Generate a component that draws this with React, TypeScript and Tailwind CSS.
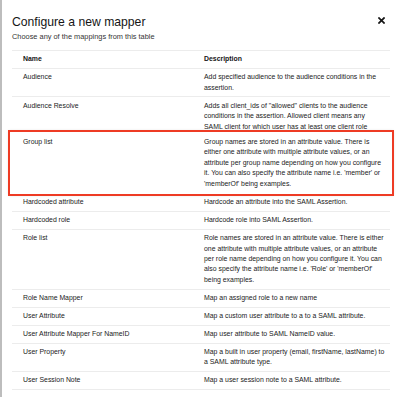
import { Fragment } from 'react';

type Mapper = {
  name: string;
  description: string;
  narrow?: boolean;
};

const mappers: Mapper[] = [
  {
    name: 'Audience',
    description: 'Add specified audience to the audience conditions in the assertion.',
  },
  {
    name: 'Audience Resolve',
    description:
      'Adds all client_ids of "allowed" clients to the audience conditions in the assertion. Allowed client means any SAML client for which user has at least one client role',
    narrow: true,
  },
  {
    name: 'Group list',
    description:
      "Group names are stored in an attribute value. There is either one attribute with multiple attribute values, or an attribute per group name depending on how you configure it. You can also specify the attribute name i.e. 'member' or 'memberOf' being examples.",
  },
  { name: 'Hardcoded attribute', description: 'Hardcode an attribute into the SAML Assertion.' },
  { name: 'Hardcoded role', description: 'Hardcode role into SAML Assertion.' },
  {
    name: 'Role list',
    description:
      "Role names are stored in an attribute value. There is either one attribute with multiple attribute values, or an attribute per role name depending on how you configure it. You can also specify the attribute name i.e. 'Role' or 'memberOf' being examples.",
  },
  { name: 'Role Name Mapper', description: 'Map an assigned role to a new name' },
  { name: 'User Attribute', description: 'Map a custom user attribute to a to a SAML attribute.' },
  { name: 'User Attribute Mapper For NameID', description: 'Map user attribute to SAML NameID value.' },
  {
    name: 'User Property',
    description: 'Map a built in user property (email, firstName, lastName) to a SAML attribute type.',
  },
  { name: 'User Session Note', description: 'Map a user session note to a SAML attribute.' },
];

function CloseIcon() {
  return (
    <svg width="7" height="7" viewBox="0 0 8 8" className="text-[#151515]">
      <path d="M1.2 1.2 L6.8 6.8 M6.8 1.2 L1.2 6.8" stroke="currentColor" strokeWidth="2" strokeLinecap="square" />
    </svg>
  );
}

export default function App() {
  return (
    <div
      className="w-[400px] h-[397px] overflow-hidden bg-white flex"
      style={{ fontFamily: '"Liberation Sans", Arial, sans-serif' }}
    >
      <div className="w-[2px] bg-[#bdbdbd] shrink-0" />
      <div className="flex-1 pl-[10px] pr-[10px] pt-[13px]">
        <div className="flex items-start justify-between">
          <h1 className="text-[12.2px] leading-[18px] text-[#151515]">Configure a new mapper</h1>
          <button className="mt-[4px] mr-[5px]">
            <CloseIcon />
          </button>
        </div>
        <p className="mt-[1px] text-[7.4px] leading-[10px] text-[#333]">Choose any of the mappings from this table</p>

        <div className="mt-[8px] border-t border-[#ececec] text-[6.9px] leading-[10.4px] text-[#222]">
          <div className="grid grid-cols-[181px_1fr] border-b border-[#ececec] font-bold text-[#151515]">
            <div className="pl-[11px] py-[3.3px]">Name</div>
            <div className="pl-[11px] py-[3.3px]">Description</div>
          </div>
          {mappers.map((m) => {
            const highlighted = m.name === 'Group list';
            return (
              <Fragment key={m.name}>
                {highlighted ? (
                  <div className="-mx-[2px] outline-2 outline-[#ee3b24] bg-white shadow-[0_0_3px_1px_rgba(0,0,0,0.18)] relative z-10">
                    <div className="grid grid-cols-[183px_1fr] pr-[6px]">
                      <div className="pl-[13px] py-[5px]">{m.name}</div>
                      <div className="pl-[11px] py-[5px]">{m.description}</div>
                    </div>
                  </div>
                ) : (
                  <div
                    className={
                      m.narrow
                        ? 'grid grid-cols-[181px_1fr] pr-[12px] pt-[3.3px]'
                        : 'grid grid-cols-[181px_1fr] pr-[4px] py-[3.3px] border-b border-[#ececec]'
                    }
                  >
                    <div className="pl-[11px]">{m.name}</div>
                    <div className="pl-[11px]">{m.description}</div>
                  </div>
                )}
              </Fragment>
            );
          })}
        </div>
      </div>
    </div>
  );
}
